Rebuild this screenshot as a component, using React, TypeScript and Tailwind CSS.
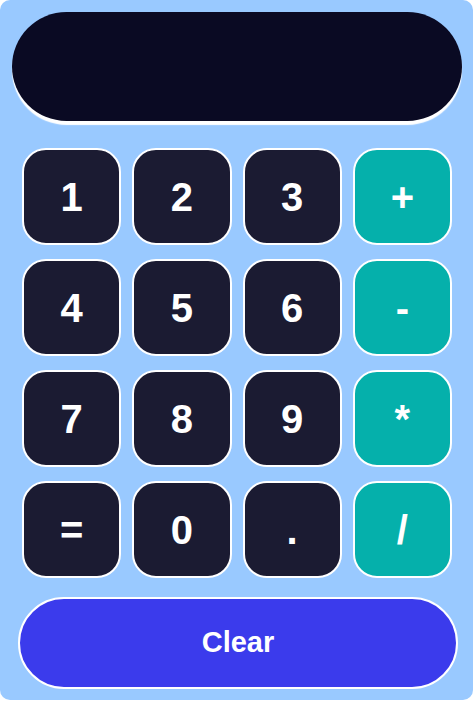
import * as React from "react";

const keys: { label: string; op?: boolean }[] = [
  { label: "1" }, { label: "2" }, { label: "3" }, { label: "+", op: true },
  { label: "4" }, { label: "5" }, { label: "6" }, { label: "-", op: true },
  { label: "7" }, { label: "8" }, { label: "9" }, { label: "*", op: true },
  { label: "=" }, { label: "0" }, { label: "." }, { label: "/", op: true },
];

export default function App() {
  return (
    <div className="w-[473px] h-[701px] bg-white" style={{ fontFamily: '"Liberation Sans", Arial, sans-serif' }}>
      <div className="w-[473px] h-[700px] bg-[#99c9ff] rounded-[10px] pt-[12px]">
        <div className="ml-[12px] w-[450px] h-[109px] rounded-full bg-[#0a0a23] shadow-[0_4px_1px_#ffffff]"></div>

        <div className="ml-[22px] w-[430px] mt-[27px] grid grid-cols-4 gap-x-[11px] gap-y-[14px]">
          {keys.map((k) => (
            <button
              key={k.label}
              className={
                "h-[97px] rounded-[24px] border-2 border-white text-white font-bold text-[40px] flex items-center justify-center " +
                (k.op ? "bg-[#05b0ab]" : "bg-[#1b1b32]")
              }
            >
              {k.label}
            </button>
          ))}
        </div>

        <div className="ml-[18px] w-[440px] mt-[19px]">
          <button className="w-full h-[92px] rounded-full border-2 border-white bg-[#3b3bec] text-white font-bold text-[29px]">
            Clear
          </button>
        </div>
      </div>
    </div>
  );
}
